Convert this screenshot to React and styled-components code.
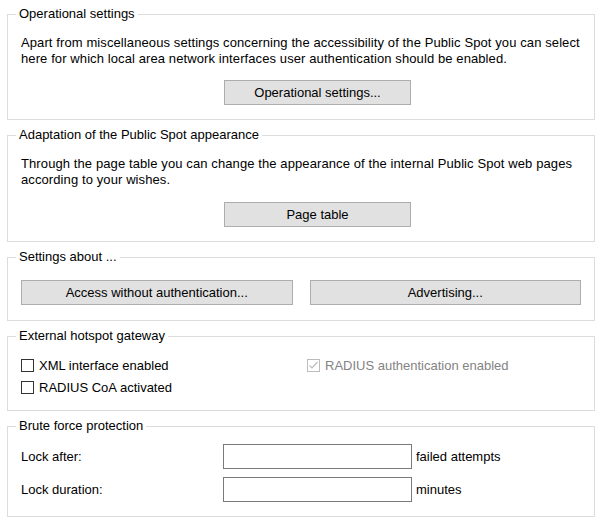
import React, { useState } from "react";
import styled, { createGlobalStyle } from "styled-components";

const GlobalStyle = createGlobalStyle`
  body {
    margin: 0;
    background: #fff;
    font-family: "Liberation Sans", Arial, sans-serif;
    font-size: 13px;
    color: #000;
  }
`;

const Page = styled.div`
  width: 600px;
  padding: 6px 5px 0 7px;
  box-sizing: border-box;
  display: flex;
  flex-direction: column;
  gap: 7px;
`;

const Group = styled.fieldset`
  margin: 0;
  min-width: 0;
  border: 1px solid #dcdcdc;
  padding: 0 13px ${(p) => p.$bottom || 14}px 13px;
`;

const Legend = styled.legend`
  margin-left: -5px;
  padding: 0 3px;
  line-height: 16px;
`;

const Desc = styled.p`
  margin: 13px 0 0;
  line-height: 16px;
  letter-spacing: 0.1px;
`;

const ButtonRow = styled.div`
  display: flex;
  margin-top: ${(p) => p.$top || 13}px;
  padding-left: ${(p) => p.$indent || 0}px;
  gap: 17px;
`;

const Button = styled.button`
  height: 25px;
  width: ${(p) => (p.$width ? `${p.$width}px` : "auto")};
  flex: ${(p) => (p.$width ? "none" : "1")};
  box-sizing: border-box;
  background: #e1e1e1;
  border: 1px solid #adadad;
  border-radius: 0;
  font-family: inherit;
  font-size: 13px;
  color: #000;
  padding: 0;
`;

const CheckGrid = styled.div`
  display: grid;
  grid-template-columns: 286px 1fr;
  row-gap: 5px;
  margin-top: 13px;
`;

const CheckLabel = styled.label`
  display: flex;
  align-items: center;
  gap: 5px;
  height: 17px;
  color: ${(p) => (p.$disabled ? "#838383" : "#000")};
`;

const Box = styled.span`
  width: 13px;
  height: 13px;
  box-sizing: border-box;
  border: 1px solid ${(p) => (p.$disabled ? "#bcbcbc" : "#333")};
  background: #fff;
  display: flex;
  align-items: center;
  justify-content: center;
`;

const FieldGrid = styled.div`
  display: grid;
  grid-template-columns: 202px 189px auto;
  row-gap: 8px;
  align-items: center;
  margin-top: 10px;
`;

const TextInput = styled.input`
  height: 25px;
  box-sizing: border-box;
  border: 1px solid #7a7a7a;
  padding: 0 3px;
  font-family: inherit;
  font-size: 13px;
  outline: none;
`;

const Unit = styled.span`
  padding-left: 4px;
`;

function Check({ label, checked, disabled }) {
  return (
    <CheckLabel $disabled={disabled}>
      <Box $disabled={disabled}>
        {checked && (
          <svg width="11" height="11" viewBox="0 0 11 11">
            <path d="M1.5 5.5 L4 8 L9.5 2" fill="none" stroke="#bcbcbc" strokeWidth="1.2" />
          </svg>
        )}
      </Box>
      {label}
    </CheckLabel>
  );
}

export default function App() {
  const [lockAfter, setLockAfter] = useState("");
  const [lockDuration, setLockDuration] = useState("");

  return (
    <Page>
      <GlobalStyle />
      <Group>
        <Legend>Operational settings</Legend>
        <Desc>
          Apart from miscellaneous settings concerning the accessibility of the Public Spot you can select
          <br />
          here for which local area network interfaces user authentication should be enabled.
        </Desc>
        <ButtonRow $indent={203}>
          <Button $width={187}>Operational settings...</Button>
        </ButtonRow>
      </Group>

      <Group>
        <Legend>Adaptation of the Public Spot appearance</Legend>
        <Desc>
          Through the page table you can change the appearance of the internal Public Spot web pages
          <br />
          according to your wishes.
        </Desc>
        <ButtonRow $indent={203} $top={14}>
          <Button $width={187}>Page table</Button>
        </ButtonRow>
      </Group>

      <Group $bottom={15}>
        <Legend>Settings about ...</Legend>
        <ButtonRow $top={15}>
          <Button>Access without authentication...</Button>
          <Button>Advertising...</Button>
        </ButtonRow>
      </Group>

      <Group>
        <Legend>External hotspot gateway</Legend>
        <CheckGrid>
          <Check label="XML interface enabled" />
          <Check label="RADIUS authentication enabled" checked disabled />
          <Check label="RADIUS CoA activated" />
        </CheckGrid>
      </Group>

      <Group>
        <Legend>Brute force protection</Legend>
        <FieldGrid>
          <span>Lock after:</span>
          <TextInput value={lockAfter} onChange={(e) => setLockAfter(e.target.value)} />
          <Unit>failed attempts</Unit>
          <span>Lock duration:</span>
          <TextInput value={lockDuration} onChange={(e) => setLockDuration(e.target.value)} />
          <Unit>minutes</Unit>
        </FieldGrid>
      </Group>
    </Page>
  );
}
